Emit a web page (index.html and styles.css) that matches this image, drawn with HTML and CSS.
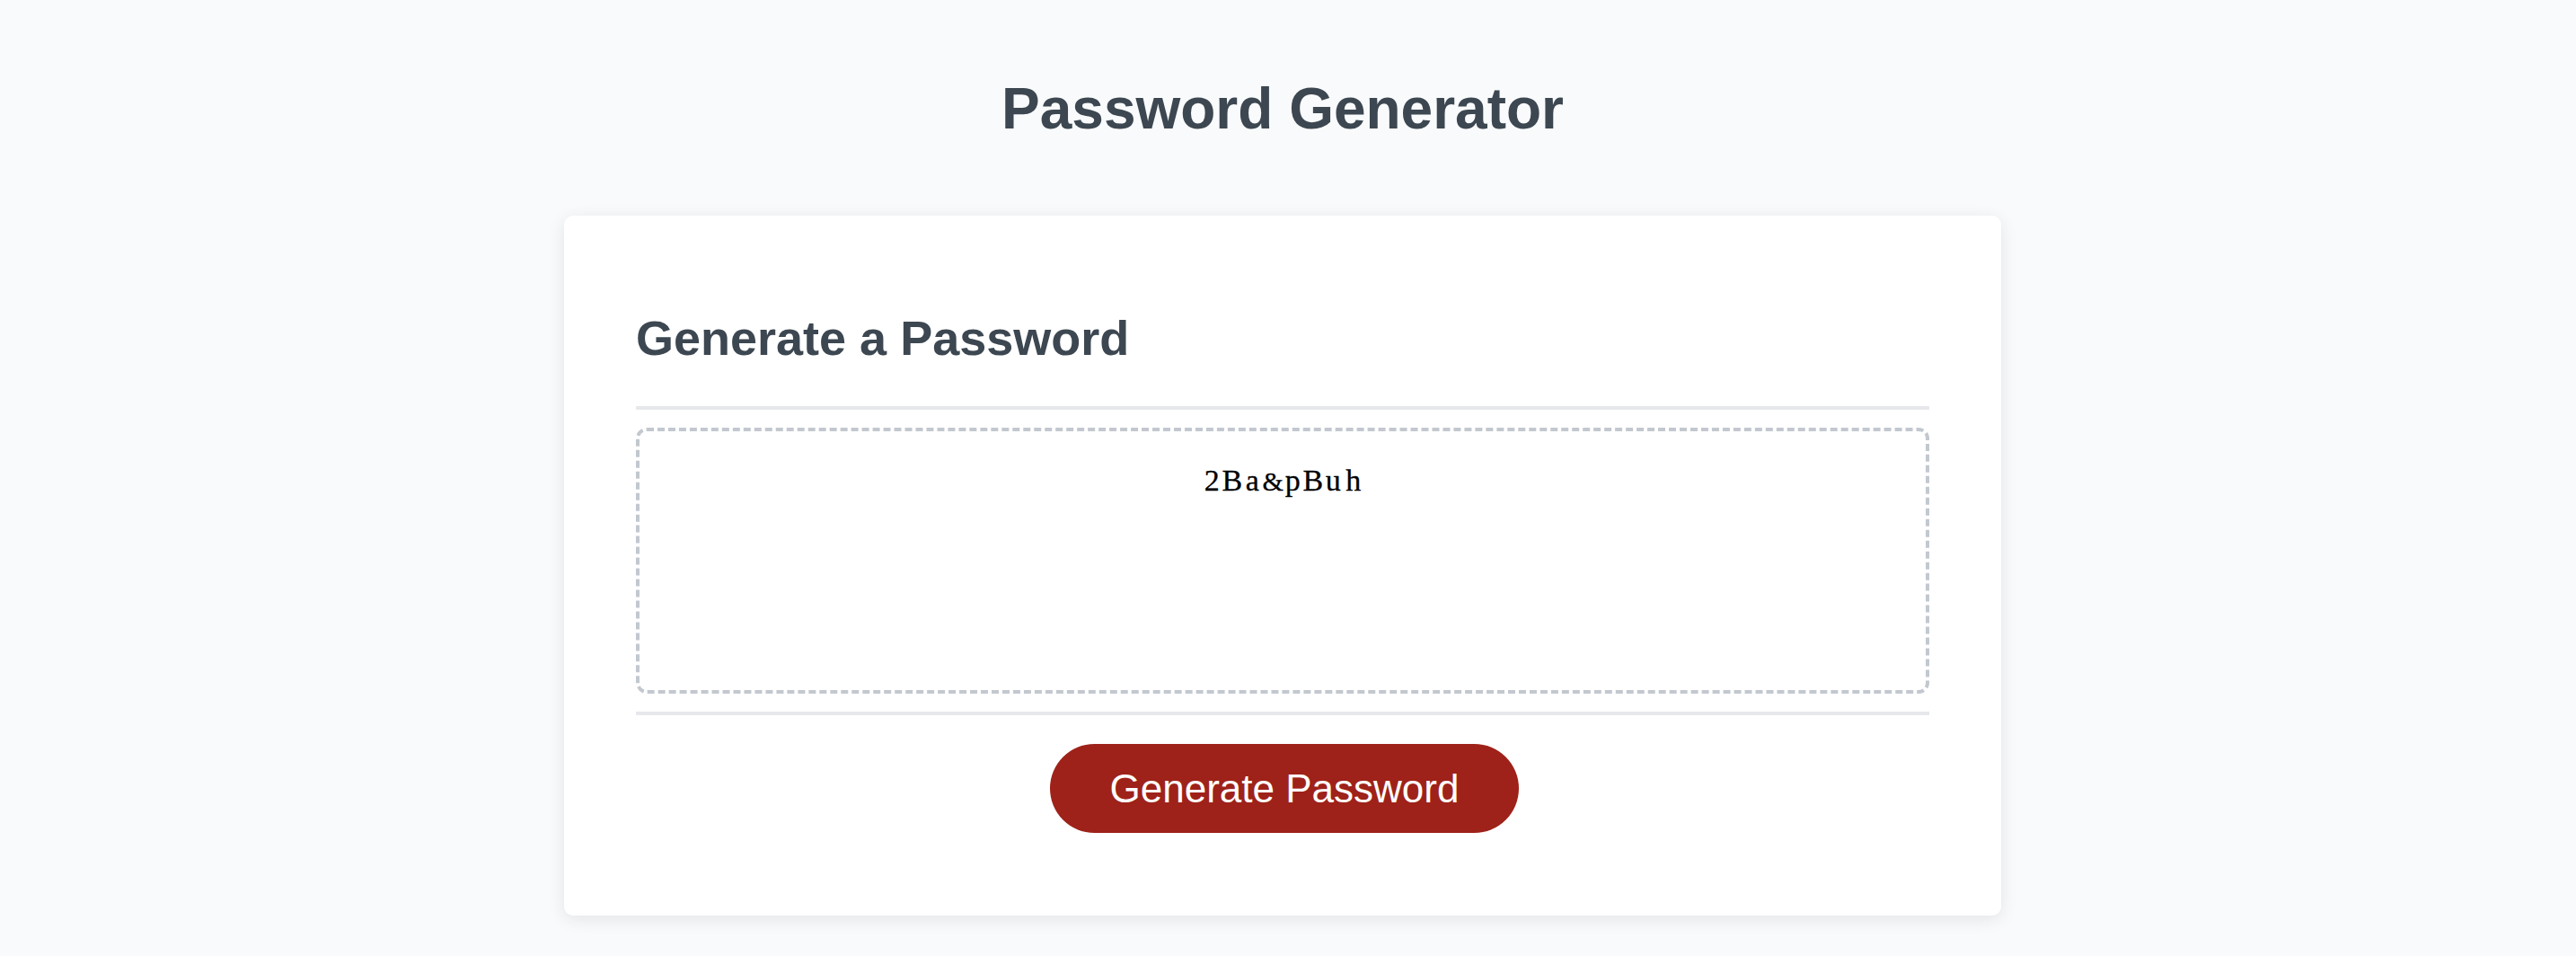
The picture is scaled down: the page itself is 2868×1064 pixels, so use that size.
FILE: index.html
```html
<!DOCTYPE html>
<html lang="en">
<head>
<meta charset="UTF-8">
<title>Password Generator</title>
<link rel="stylesheet" href="styles.css">
</head>
<body>
<div class="page">
  <h1 class="title">Password Generator</h1>
  <div class="card">
    <div class="card-header">
      <h2 class="card-title">Generate a Password</h2>
    </div>
    <div class="card-body">
      <div class="password" role="textbox" aria-readonly="true" aria-label="Generated Password"><span class="ch">2</span><span class="ch">B</span><span class="ch">a</span><span class="ch amp">&amp;</span><span class="ch">p</span><span class="ch">B</span><span class="ch">u</span><span class="ch">h</span></div>
    </div>
    <div class="card-footer">
      <button class="btn" type="button">Generate Password</button>
    </div>
  </div>
</div>
</body>
</html>
```

FILE: styles.css
```css
* {
  box-sizing: border-box;
}

html, body {
  margin: 0;
  padding: 0;
  background: #f9fafb;
  font-family: "Liberation Sans", Arial, Helvetica, sans-serif;
}

.page {
  padding: 84px 12px 40px 0;
}

.title {
  margin: 0;
  text-align: center;
  font-size: 64px;
  line-height: 74px;
  font-weight: 700;
  color: #3c4751;
}

.card {
  width: 1600px;
  margin: 82px auto 0;
  background: #ffffff;
  border-radius: 10px;
  box-shadow: 0 4px 18px rgba(30, 40, 60, 0.10);
  padding: 105px 80px 92px;
}

.card-header {
  border-bottom: 4px solid #e7e8eb;
  padding-bottom: 44px;
}

.card-title {
  margin: 0;
  font-size: 54px;
  line-height: 63px;
  font-weight: 700;
  color: #3c4751;
}

.card-body {
  padding: 20px 0;
  border-bottom: 4px solid #e7e8eb;
}

.password {
  width: 100%;
  height: 296px;
  padding: 35px 20px;
  border: 4px dashed #c3c8cf;
  border-radius: 12px;
  background: #ffffff;
  color: #000000;
  text-align: center;
  font-family: "Liberation Serif", "Times New Roman", serif;
  font-size: 34px;
  line-height: 40px;
  -webkit-text-stroke: 0.3px #000000;
}

.ch {
  display: inline-block;
  width: 22.5px;
  text-align: center;
}

.amp {
  font-size: 30px;
}

.card-footer {
  display: flex;
  justify-content: center;
  padding-top: 32px;
}

.btn {
  height: 99px;
  margin-left: 4px;
  padding: 0 67px;
  border: none;
  border-radius: 50px;
  background: #9e2219;
  color: #ffffff;
  font-family: "Liberation Sans", Arial, Helvetica, sans-serif;
  font-size: 44px;
  cursor: pointer;
}
```
